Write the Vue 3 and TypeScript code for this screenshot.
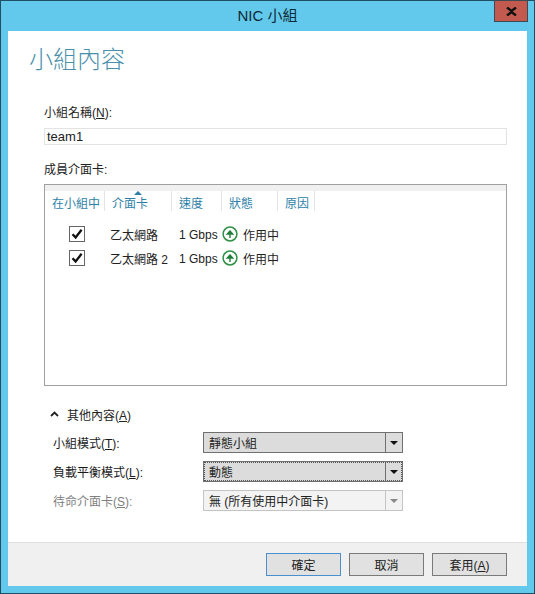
<script setup lang="ts">
interface Column {
  label: string
  width: number
  sorted?: boolean
}

interface Member {
  name: string
  speed: string
  state: string
}

interface Field {
  label: string
  key: string
  value: string
  kind: string
}

const columns: Column[] = [
  { label: '在小組中', width: 60 },
  { label: '介面卡', width: 67, sorted: true },
  { label: '速度', width: 50 },
  { label: '狀態', width: 56 },
  { label: '原因', width: 37 },
]

const members: Member[] = [
  { name: '乙太網路', speed: '1 Gbps', state: '作用中' },
  { name: '乙太網路 2', speed: '1 Gbps', state: '作用中' },
]

const fields: Field[] = [
  { label: '小組模式', key: 'T', value: '靜態小組', kind: 'normal' },
  { label: '負載平衡模式', key: 'L', value: '動態', kind: 'focused' },
  { label: '待命介面卡', key: 'S', value: '無 (所有使用中介面卡)', kind: 'disabled' },
]
</script>

<template>
  <div class="window">
    <header class="titlebar">
      <span class="title">NIC 小組</span>
      <button class="close">
        <svg viewBox="0 0 11 9" width="11" height="9">
          <path d="M1 .5 5.500 4 10 .5M1 8.500 5.500 5 10 8.500" fill="none" stroke="#111" stroke-width="2.400" />
        </svg>
      </button>
    </header>

    <div class="client">
      <main class="content">
        <h1 class="heading">小組內容</h1>

        <label class="label name-label">小組名稱(<u>N</u>):</label>
        <div class="textbox">team1</div>

        <label class="label members-label">成員介面卡:</label>
        <section class="list">
          <div class="list-top"></div>
          <div class="list-head">
            <div
              v-for="col in columns"
              :key="col.label"
              class="col"
              :style="{ width: col.width + 'px' }"
            >
              <i v-if="col.sorted" class="sort"></i>
              {{ col.label }}
            </div>
          </div>
          <div class="rows">
            <div v-for="m in members" :key="m.name" class="row">
              <span class="check">
                <svg viewBox="0 0 14 14" width="14" height="14">
                  <path d="M2.500 7.200 5.600 10.400 11.600 2.800" fill="none" stroke="#111" stroke-width="2.300" />
                </svg>
              </span>
              <span class="cell-name">{{ m.name }}</span>
              <span class="cell-speed">{{ m.speed }}</span>
              <svg class="state-icon" viewBox="0 0 16 16" width="16" height="16">
                <circle cx="8" cy="8" r="6.900" fill="#fff" stroke="#2f8f45" stroke-width="1.500" />
                <path d="M8 12V6M5.300 8 8 5l2.700 3z" fill="#1f7f38" stroke="#1f7f38" stroke-width="1.400" />
              </svg>
              <span class="cell-state">{{ m.state }}</span>
            </div>
          </div>
        </section>

        <div class="expander">
          <svg viewBox="0 0 9 6" width="9" height="6">
            <path d="M1 5 4.500 1.500 8 5" fill="none" stroke="#222" stroke-width="1.800" />
          </svg>
          <span>其他內容(<u>A</u>)</span>
        </div>

        <div class="form">
          <template v-for="f in fields" :key="f.key">
            <label class="field-label" :class="f.kind">{{ f.label }}(<u>{{ f.key }}</u>):</label>
            <div class="combo" :class="f.kind">
              <span class="combo-value">{{ f.value }}</span>
              <span class="combo-btn"><i></i></span>
            </div>
          </template>
        </div>
      </main>

      <footer class="footer">
        <button class="btn default">確定</button>
        <button class="btn">取消</button>
        <button class="btn">套用(<u>A</u>)</button>
      </footer>
    </div>
  </div>
</template>

<style>
html,
body {
  margin: 0;
  overflow: hidden;
}
</style>

<style scoped>
.window {
  box-sizing: border-box;
  width: 535px;
  height: 594px;
  display: flex;
  flex-direction: column;
  padding: 0 7px 7px;
  background: #63c9ec;
  border: 1px solid #1f4f63;
  font-family: "Liberation Sans", "Noto Sans CJK TC", sans-serif;
  font-size: 12px;
  color: #222;
}

.titlebar {
  position: relative;
  flex: none;
  box-sizing: border-box;
  height: 30px;
  padding-bottom: 3px;
  display: flex;
  align-items: center;
  justify-content: center;
}

.title {
  font-size: 15px;
  color: #0d2a36;
}

.close {
  position: absolute;
  top: -1px;
  right: -1px;
  width: 34px;
  height: 22px;
  padding: 0;
  display: flex;
  align-items: center;
  justify-content: center;
  background: #c35a50;
  border: 1px solid #3c4a55;
}

.client {
  flex: 1;
  min-height: 0;
  display: flex;
  flex-direction: column;
  background: #fff;
}

.content {
  flex: 1;
  min-height: 0;
  padding: 0 20px 0 36px;
}

.heading {
  margin: 13px 0 0 -15px;
  height: 32px;
  line-height: 32px;
  font-size: 24px;
  font-weight: 300;
  color: #4a90ac;
}

.label {
  display: block;
  height: 16px;
  line-height: 16px;
}

.name-label {
  margin-top: 29px;
}

.textbox {
  box-sizing: border-box;
  height: 17px;
  margin-top: 7px;
  padding-left: 2px;
  line-height: 15px;
  font-size: 13px;
  border: 1px solid #e3e3e3;
}

.members-label {
  margin-top: 17px;
}

.list {
  box-sizing: border-box;
  height: 202px;
  margin-top: 6px;
  border: 1px solid #a0a0a0;
}

.list-top {
  height: 6px;
  background: #f0f0f0;
}

.list-head {
  display: flex;
  height: 20px;
}

.col {
  position: relative;
  box-sizing: border-box;
  padding: 3px 0 0 7px;
  color: #2e7fa8;
  border-right: 1px solid #e4e4e4;
}

.sort {
  position: absolute;
  top: 0;
  left: 29px;
  border: 4px solid transparent;
  border-top: 0;
  border-bottom: 4px solid #2e7fa8;
}

.rows {
  padding-top: 11px;
}

.row {
  display: flex;
  align-items: center;
  height: 24px;
}

.check {
  box-sizing: border-box;
  width: 16px;
  height: 16px;
  margin-left: 24px;
  display: flex;
  align-items: center;
  justify-content: center;
  border: 1px solid #666;
}

.cell-name {
  width: 68px;
  margin-left: 25px;
}

.cell-speed {
  width: 43px;
  margin: 2px 0 0 1px;
}

.state-icon {
  flex: none;
}

.cell-state {
  margin-left: 5px;
}

.expander {
  display: flex;
  align-items: center;
  gap: 8px;
  height: 16px;
  margin: 20px 0 0 6px;
}

.form {
  display: grid;
  grid-template-columns: 159px 200px;
  grid-auto-rows: 21px;
  row-gap: 8px;
  align-items: center;
  margin-top: 10px;
}

.field-label {
  padding-left: 9px;
  color: #1a1a1a;
}

.field-label.disabled {
  color: #7f7f7f;
}

.combo {
  box-sizing: border-box;
  height: 21px;
  display: flex;
  align-items: center;
  background: #dcdcdc;
  border: 1px solid #707070;
}

.combo.focused {
  outline: 1px dotted #555;
  outline-offset: -2px;
}

.combo.disabled {
  background: #f3f3f3;
  border-color: #c4c4c4;
}

.combo-value {
  flex: 1;
  padding-left: 5px;
}

.combo-btn {
  flex: none;
  width: 16px;
  height: 100%;
  display: flex;
  align-items: center;
  justify-content: center;
  border-left: 1px solid #707070;
}

.combo.disabled .combo-btn {
  border-left-color: #c4c4c4;
}

.combo-btn i {
  border: 4px solid transparent;
  border-bottom: 0;
  border-top: 4px solid #111;
}

.combo.disabled .combo-btn i {
  border-top-color: #888;
}

.footer {
  flex: none;
  box-sizing: border-box;
  height: 44px;
  display: flex;
  justify-content: flex-end;
  gap: 8px;
  padding: 10px 20px 0 0;
  background: #f0f0f0;
  border-top: 1px solid #dfdfdf;
}

.btn {
  box-sizing: border-box;
  width: 75px;
  height: 23px;
  padding: 0;
  font: inherit;
  color: #222;
  background: #e1e1e1;
  border: 1px solid #7a7a7a;
}

.btn.default {
  border-color: #4a90d0;
}
</style>
